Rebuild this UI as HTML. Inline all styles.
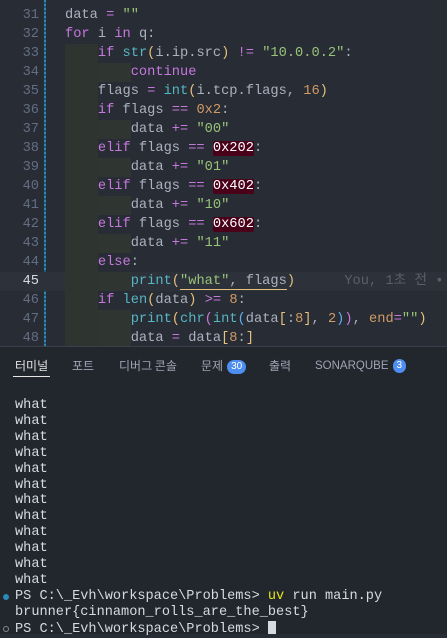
<!DOCTYPE html>
<html><head><meta charset="utf-8"><style>
*{margin:0;padding:0;box-sizing:border-box}
body{width:447px;height:634px;overflow:hidden;background:#282c34;font-family:"Liberation Mono","Noto Sans CJK KR",monospace;position:relative}
.ed{position:absolute;left:0;top:0;width:447px;height:346px;background:#282c34;overflow:hidden}
.ln{position:absolute;left:0;width:447px;height:19px;font-size:13.7px;line-height:19px;white-space:pre;color:#abb2bf}
.num{position:absolute;left:0;width:39px;text-align:right;color:#636d83}
.code{position:absolute;left:65px}
.gut{position:absolute;left:44px;top:0;width:2px;height:346px;background:repeating-linear-gradient(#2b8ab8 0 2px,#1c5a78 2px 4px)}
.ig{position:absolute;top:0;height:19px;width:33px;background:#2e3430}
.ig2{background:#2f3631}
.k{color:#c678dd}.f{color:#56b6c2}.s{color:#98c379}.n{color:#d19a66}.y{color:#e5c07b}.p{color:#c678dd}.b{color:#61afef}
.hx{background:#4a0018;color:#fff;border-radius:2px}
.pn{position:absolute;left:0;top:346px;width:447px;height:288px;background:#22262d;border-top:1px solid #3a3f4a}
.tab{position:absolute;top:10px;font-family:"Noto Sans CJK KR","Liberation Sans",sans-serif;font-size:12px;color:#9da5b4}
.badge{display:inline-block;background:#4d8ef0;color:#fff;border-radius:8px;font-size:10px;line-height:14px;height:14px;padding:0 4px;margin-left:4px;vertical-align:1px;font-family:"Liberation Sans",sans-serif}
.t{position:absolute;left:15px;font-size:13.6px;line-height:15.9px;white-space:pre;color:#d7dae0}
</style></head><body>
<div class="ed">
<div class="gut"></div>
<div class="ln" style="top:-13px"><span class="num">30</span></div>
<div class="ln" style="top:6px"><span class="num">31</span><span class="code">data <span class="k">=</span> <span class="s">""</span></span></div>
<div class="ln" style="top:25px"><span class="num">32</span><span class="code"><span class="k">for</span> i <span class="k">in</span> q:</span></div>
<div class="ln" style="top:44px"><div class="ig" style="left:65px"></div><span class="num">33</span><span class="code">    <span class="k">if</span> <span class="f">str</span><span class="y">(</span>i.ip.src<span class="y">)</span> <span class="k">!=</span> <span class="s">"10.0.0.2"</span>:</span></div>
<div class="ln" style="top:63px"><div class="ig" style="left:65px"></div><div class="ig ig2" style="left:98px"></div><span class="num">34</span><span class="code">        <span class="k">continue</span></span></div>
<div class="ln" style="top:82px"><div class="ig" style="left:65px"></div><span class="num">35</span><span class="code">    flags <span class="k">=</span> <span class="f">int</span><span class="y">(</span>i.tcp.flags, <span class="n">16</span><span class="y">)</span></span></div>
<div class="ln" style="top:101px"><div class="ig" style="left:65px"></div><span class="num">36</span><span class="code">    <span class="k">if</span> flags <span class="k">==</span> <span class="n">0x2</span>:</span></div>
<div class="ln" style="top:120px"><div class="ig" style="left:65px"></div><div class="ig ig2" style="left:98px"></div><span class="num">37</span><span class="code">        data <span class="k">+=</span> <span class="s">"00"</span></span></div>
<div class="ln" style="top:139px"><div class="ig" style="left:65px"></div><span class="num">38</span><span class="code">    <span class="k">elif</span> flags <span class="k">==</span> <span class="hx">0x202</span>:</span></div>
<div class="ln" style="top:158px"><div class="ig" style="left:65px"></div><div class="ig ig2" style="left:98px"></div><span class="num">39</span><span class="code">        data <span class="k">+=</span> <span class="s">"01"</span></span></div>
<div class="ln" style="top:177px"><div class="ig" style="left:65px"></div><span class="num">40</span><span class="code">    <span class="k">elif</span> flags <span class="k">==</span> <span class="hx">0x402</span>:</span></div>
<div class="ln" style="top:196px"><div class="ig" style="left:65px"></div><div class="ig ig2" style="left:98px"></div><span class="num">41</span><span class="code">        data <span class="k">+=</span> <span class="s">"10"</span></span></div>
<div class="ln" style="top:215px"><div class="ig" style="left:65px"></div><span class="num">42</span><span class="code">    <span class="k">elif</span> flags <span class="k">==</span> <span class="hx">0x602</span>:</span></div>
<div class="ln" style="top:234px"><div class="ig" style="left:65px"></div><div class="ig ig2" style="left:98px"></div><span class="num">43</span><span class="code">        data <span class="k">+=</span> <span class="s">"11"</span></span></div>
<div class="ln" style="top:253px"><div class="ig" style="left:65px"></div><span class="num">44</span><span class="code">    <span class="k">else</span>:</span></div>
<div class="ln" style="top:272px;background:#2c313a"><div class="ig" style="left:65px"></div><div class="ig ig2" style="left:98px"></div><span class="num" style="color:#d7dae0">45</span><span class="code">        <span class="f">print</span><span class="y">(</span><span style="border-bottom:1px solid #e5c07b"><span class="s">"what"</span>, flags</span><span class="y">)</span>      <span style="color:#5a606b">You, 1초 전 •</span></span></div>
<div class="ln" style="top:291px"><div class="ig" style="left:65px"></div><span class="num">46</span><span class="code">    <span class="k">if</span> <span class="f">len</span><span class="y">(</span>data<span class="y">)</span> <span class="k">&gt;=</span> <span class="n">8</span>:</span></div>
<div class="ln" style="top:310px"><div class="ig" style="left:65px"></div><div class="ig ig2" style="left:98px"></div><span class="num">47</span><span class="code">        <span class="f">print</span><span class="y">(</span><span class="f">chr</span><span class="p">(</span><span class="f">int</span><span class="b">(</span>data<span class="y">[</span>:<span class="n">8</span><span class="y">]</span>, <span class="n">2</span><span class="b">)</span><span class="p">)</span>, <span class="n">end</span><span class="k">=</span><span class="s">""</span><span class="y">)</span></span></div>
<div class="ln" style="top:329px"><div class="ig" style="left:65px"></div><div class="ig ig2" style="left:98px"></div><span class="num">48</span><span class="code">        data <span class="k">=</span> data<span class="y">[</span><span class="n">8</span>:<span class="y">]</span></span></div>
</div>
<div class="pn">
<div class="tab" style="left:15px;color:#e6e6e6">터미널</div>
<div style="position:absolute;left:13px;top:29px;width:37px;height:1px;background:#e6e6e6"></div>
<div class="tab" style="left:72px">포트</div>
<div class="tab" style="left:119px">디버그 콘솔</div>
<div class="tab" style="left:201px">문제<span class="badge">30</span></div>
<div class="tab" style="left:269px">출력</div>
<div class="tab" style="left:315px;top:11px;font-family:'Liberation Sans',sans-serif;font-size:11.5px;line-height:17px">SONARQUBE<span class="badge" style="padding:0 4px">3</span></div>
</div>
<div class="t" style="top:398px">what
what
what
what
what
what
what
what
what
what
what
what
PS C:\_Evh\workspace\Problems&gt; <span style="color:#e5e510">uv</span> run main.py
brunner{cinnamon_rolls_are_the_best}
PS C:\_Evh\workspace\Problems&gt; <span style="display:inline-block;width:8px;height:13px;background:#d7dae0;vertical-align:-2px"></span></div>
<div style="position:absolute;left:3px;top:594px;width:6px;height:6px;border-radius:50%;background:#2b8ab8"></div>
<div style="position:absolute;left:3px;top:626px;width:6px;height:6px;border-radius:50%;border:1px solid #888"></div>
</body></html>
